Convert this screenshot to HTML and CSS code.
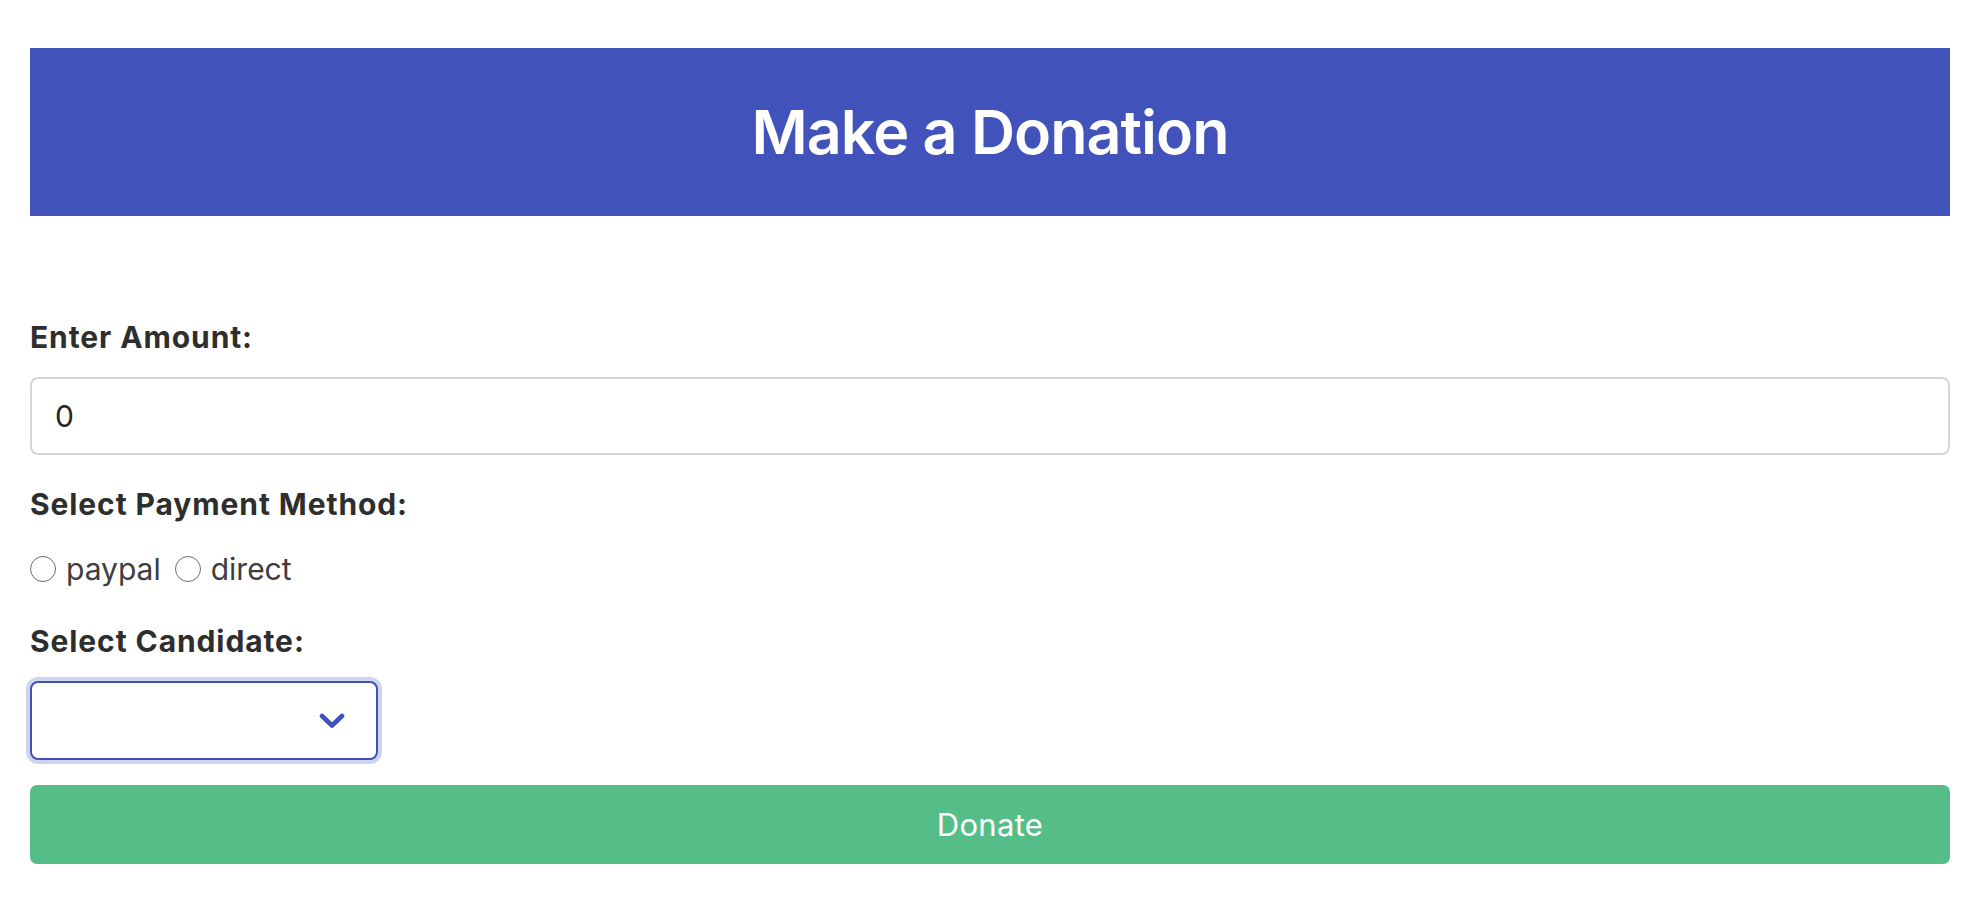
FILE: index.html
```html
<!DOCTYPE html>
<html lang="en">
<head>
<meta charset="utf-8">
<title>Make a Donation</title>
<link rel="stylesheet" href="styles.css">
</head>
<body>
<div class="page">
  <header class="banner">
    <h1 class="banner-title">Make a Donation</h1>
  </header>
  <form class="form">
    <label class="field-label" for="amount">Enter Amount:</label>
    <input class="text-input" id="amount" type="text" value="0">

    <div class="field-label label-gap">Select Payment Method:</div>
    <div class="radio-row">
      <label class="radio-option"><input class="radio" type="radio" name="method" value="paypal"><span>paypal</span></label>
      <label class="radio-option"><input class="radio" type="radio" name="method" value="direct"><span>direct</span></label>
    </div>

    <label class="field-label label-gap" for="candidate">Select Candidate:</label>
    <div class="select-wrap">
      <select class="select" id="candidate">
        <option value=""></option>
      </select>
      <svg class="chevron" width="26" height="16" viewBox="0 0 26 16" aria-hidden="true">
        <path d="M3 3 L13 12.5 L23 3" fill="none" stroke="#4052ba" stroke-width="4.6" stroke-linecap="round" stroke-linejoin="round"/>
      </svg>
    </div>

    <button class="donate" type="button">Donate</button>
  </form>
</div>
</body>
</html>
```

FILE: styles.css
```css
* { box-sizing: border-box; }

html, body {
  margin: 0;
  padding: 0;
  background: #ffffff;
}

body {
  font-family: Inter, "Noto Sans", "Liberation Sans", sans-serif;
  color: #333333;
}

.page {
  padding: 48px 30px 0 30px;
}

.banner {
  height: 168px;
  background: #4152bb;
  display: flex;
  align-items: center;
  justify-content: center;
}

.banner-title {
  margin: 0;
  color: #ffffff;
  font-size: 61px;
  font-weight: 600;
  line-height: 1;
  letter-spacing: -1px;
}

.form {
  display: flex;
  flex-direction: column;
  align-items: flex-start;
  padding-top: 99px;
}

.field-label {
  display: block;
  font-size: 30px;
  line-height: 45px;
  font-weight: 700;
  letter-spacing: 0.9px;
  color: #2e2e2e;
  margin-bottom: 17px;
}

.label-gap {
  margin-top: 27px;
}

.text-input {
  width: 100%;
  height: 78px;
  border: 2px solid #d6d6d6;
  border-radius: 8px;
  padding: 0 23px;
  font-family: inherit;
  font-size: 30px;
  color: #262626;
  background: #ffffff;
  outline: none;
}

.radio-row {
  display: flex;
  align-items: baseline;
  height: 45px;
  margin-top: 3px;
  line-height: 45px;
  font-size: 30px;
  color: #3d3d3d;
}

.radio-option {
  display: flex;
  align-items: center;
  margin-right: 14px;
}

.radio {
  appearance: none;
  -webkit-appearance: none;
  width: 26px;
  height: 26px;
  margin: 0 10px 0 0;
  border: 1.6px solid #6b6b6b;
  border-radius: 50%;
  background: #ffffff;
  position: relative;
  top: -1px;
}

.select-wrap {
  position: relative;
  width: 348px;
  height: 79px;
}

.select {
  appearance: none;
  -webkit-appearance: none;
  width: 100%;
  height: 100%;
  border: 2px solid #4052ba;
  border-radius: 8px;
  background: #ffffff;
  box-shadow: 0 0 0 4px rgba(64, 82, 186, 0.25);
  font-family: inherit;
  font-size: 30px;
  padding: 0 23px;
  outline: none;
}

.chevron {
  position: absolute;
  right: 33px;
  top: 32px;
  pointer-events: none;
}

.donate {
  margin-top: 25px;
  width: 100%;
  height: 79px;
  border: none;
  border-radius: 7px;
  background: #55be88;
  color: #ffffff;
  font-family: inherit;
  font-size: 31px;
  font-weight: 400;
  letter-spacing: 0.3px;
}
```
